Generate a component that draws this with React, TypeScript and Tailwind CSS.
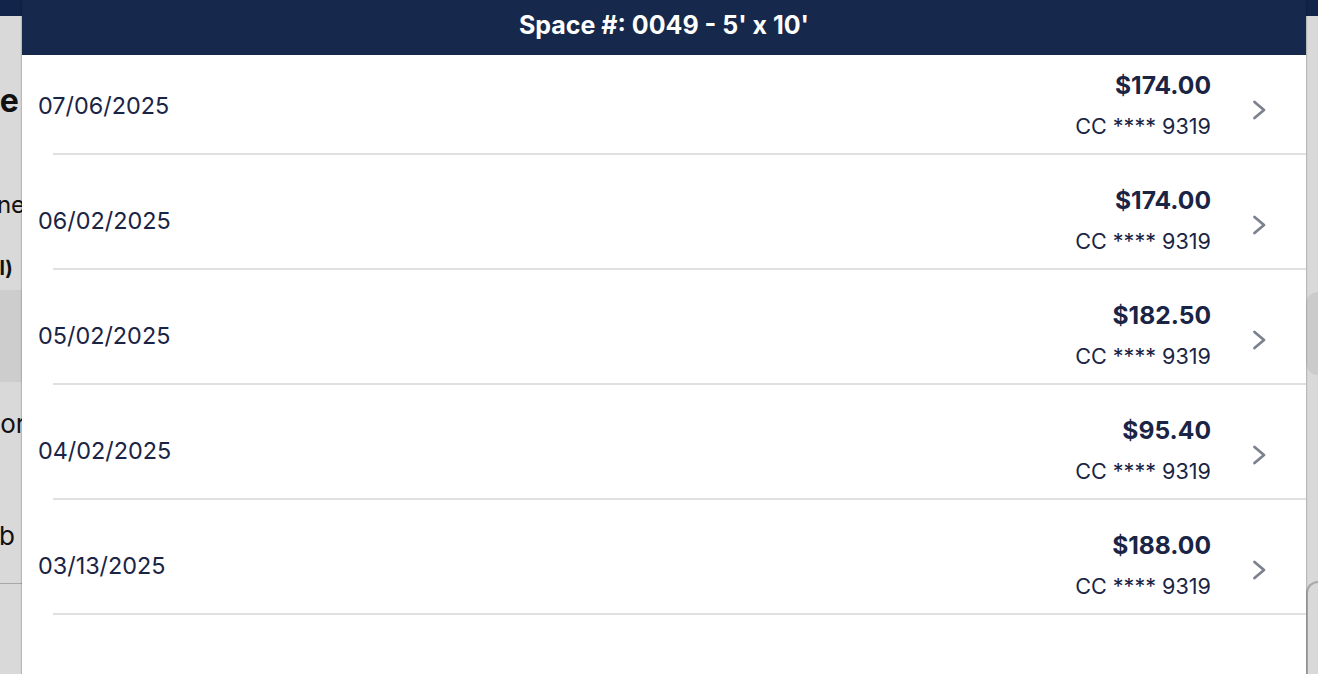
import React from 'react';

interface Payment {
  date: string;
  amount: string;
  method: string;
}

const payments: Payment[] = [
  { date: '07/06/2025', amount: '$174.00', method: 'CC **** 9319' },
  { date: '06/02/2025', amount: '$174.00', method: 'CC **** 9319' },
  { date: '05/02/2025', amount: '$182.50', method: 'CC **** 9319' },
  { date: '04/02/2025', amount: '$95.40', method: 'CC **** 9319' },
  { date: '03/13/2025', amount: '$188.00', method: 'CC **** 9319' },
];

function Chevron() {
  return (
    <svg width="14" height="20" viewBox="0 0 14 20" fill="none" className="ml-[41px] mt-[9px] shrink-0">
      <polyline points="2.5,2 12,10 2.5,18" stroke="#7b818f" strokeWidth="2.8" strokeLinecap="round" strokeLinejoin="round" />
    </svg>
  );
}

export default function App() {
  return (
    <div className="relative h-[674px] w-full overflow-hidden bg-[#d9d9d9] text-[#111]" style={{ fontFamily: 'Inter, "Noto Sans", sans-serif' }}>
      {/* page behind the sheet */}
      <div className="h-[16px] bg-[#12244a]" />
      <div className="flex">
        <div className="flex w-[1306px] shrink-0 flex-col">
          <div className="mt-[68px] -ml-[79px] text-[32px] font-bold leading-[34px]">Space</div>
          <div className="mt-[72px] -ml-[47px] text-[24px] leading-[30px]">Phone</div>
          <div className="mt-[36px] -ml-[25px] text-[20px] font-bold leading-[24px]">(all)</div>
          <div className="mt-[10px] h-[92px] bg-[#cdcdcd]" />
          <div className="mt-[26px] -ml-[37px] text-[26px] leading-[32px]">Floor</div>
          <div className="mt-[80px] -ml-[19px] text-[26px] leading-[32px]">Ab</div>
          <div className="mt-[31px] h-px bg-[#a8a8a8]" />
        </div>
        <div className="flex flex-1 flex-col">
          <div className="mt-[276px] h-[83px] rounded-l-[12px] bg-[#cbcbcb]" />
          <div className="mt-[206px] h-[120px] rounded-tl-[12px] border-l-2 border-t-2 border-[#a9a9a9]" />
        </div>
      </div>

      {/* payment history sheet */}
      <div className="absolute left-[22px] top-0 h-[700px] w-[1284px] bg-white shadow-[0_0_2px_rgba(0,0,0,0.45)]">
        <div className="flex h-[55px] items-center justify-center bg-[#16284b] pb-[4px]">
          <span className="text-[25px] font-bold text-white">Space #: 0049 - 5' x 10'</span>
        </div>
        <div>
          {payments.map((p, i) => (
            <div key={i}>
              <div className={`flex items-center pl-4 pr-10 pb-[15px] ${i === 0 ? 'pt-[18px]' : 'pt-[33px]'}`}>
                <span className="flex-1 text-[23.4px] leading-[24px] text-[#1a2444]">{p.date}</span>
                <div className="text-right text-[#1a2444]">
                  <div className="text-[24.6px] font-bold leading-[24px]">{p.amount}</div>
                  <div className="mt-[17px] text-[21.6px] leading-[24px]">{p.method}</div>
                </div>
                <Chevron />
              </div>
              <div className="ml-[31px] h-[2px] bg-[#e0e0e0]" />
            </div>
          ))}
        </div>
      </div>
    </div>
  );
}
